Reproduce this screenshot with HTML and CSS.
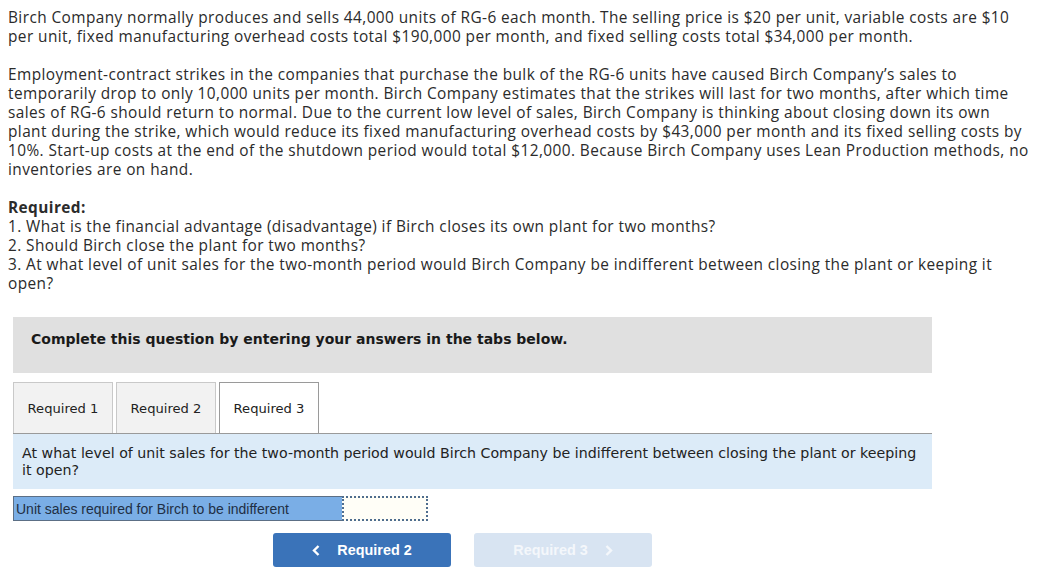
FILE: index.html
```html
<!DOCTYPE html>
<html>
<head>
<meta charset="utf-8">
<link rel="stylesheet" href="styles.css">
</head>
<body>
<div class="page">
  <div class="intro">
    <p>Birch Company normally produces and sells 44,000 units of RG-6 each month. The selling price is $20 per unit, variable costs are $10<br>per unit, fixed manufacturing overhead costs total $190,000 per month, and fixed selling costs total $34,000 per month.</p>
    <p>Employment-contract strikes in the companies that purchase the bulk of the RG-6 units have caused Birch Company’s sales to<br>temporarily drop to only 10,000 units per month. Birch Company estimates that the strikes will last for two months, after which time<br>sales of RG-6 should return to normal. Due to the current low level of sales, Birch Company is thinking about closing down its own<br>plant during the strike, which would reduce its fixed manufacturing overhead costs by $43,000 per month and its fixed selling costs by<br>10%. Start-up costs at the end of the shutdown period would total $12,000. Because Birch Company uses Lean Production methods, no<br>inventories are on hand.</p>
    <p class="last"><b>Required:</b><br>1. What is the financial advantage (disadvantage) if Birch closes its own plant for two months?<br>2. Should Birch close the plant for two months?<br>3. At what level of unit sales for the two-month period would Birch Company be indifferent between closing the plant or keeping it<br>open?</p>
  </div>

  <div class="panel">
    <div class="banner">Complete this question by entering your answers in the tabs below.</div>
    <div class="tabs">
      <div class="tab">Required 1</div>
      <div class="tab">Required 2</div>
      <div class="tab active">Required 3</div>
    </div>
    <div class="qbox">At what level of unit sales for the two-month period would Birch Company be indifferent between closing the plant or keeping<br>it open?</div>
    <div class="answer">
      <div class="label">Unit sales required for Birch to be indifferent</div>
      <div class="input"></div>
    </div>
    <div class="nav">
      <div class="btn prev"><svg class="chev left" width="8" height="11" viewBox="0 0 8 11"><path d="M6.5 1 L2 5.5 L6.5 10" fill="none" stroke="currentColor" stroke-width="2.4"/></svg>Required 2</div>
      <div class="btn next">Required 3<svg class="chev right" width="8" height="11" viewBox="0 0 8 11"><path d="M1.5 1 L6 5.5 L1.5 10" fill="none" stroke="currentColor" stroke-width="2.4"/></svg></div>
    </div>
  </div>
</div>
</body>
</html>
```

FILE: styles.css
```css
html, body {
  margin: 0;
  padding: 0;
  background: #fff;
}
.page {
  padding: 8px 0 0 8px;
}
.intro {
  font-family: "Open Sans", "Liberation Sans", sans-serif;
  font-size: 15.4px;
  letter-spacing: 0.42px;
  line-height: 19px;
  color: #2b2b2b;
  white-space: nowrap;
}
.intro p {
  margin: 0 0 19px 0;
}
.intro p.last {
  margin-bottom: 0;
}
.intro b {
  font-weight: 700;
}
.panel {
  margin-left: 5px;
  margin-top: 24px;
  width: 919px;
}
.banner {
  background: #e0e0e0;
  height: 56px;
  box-sizing: border-box;
  padding: 13px 18px 0 18px;
  font-family: "DejaVu Sans", Verdana, sans-serif;
  font-weight: bold;
  font-size: 14px;
  line-height: 18px;
  color: #1a1a1a;
}
.tabs {
  display: flex;
  gap: 3px;
  margin-top: 9px;
  height: 51px;
}
.tab {
  width: 100px;
  box-sizing: border-box;
  border: 1px solid #c9c9c9;
  border-bottom: none;
  background: #f2f2f2;
  display: flex;
  align-items: center;
  justify-content: center;
  font-family: "DejaVu Sans", Verdana, sans-serif;
  font-size: 13.1px;
  color: #222;
}
.tab.active {
  background: #fff;
  border: 1px solid #9a9a9a;
  border-bottom: none;
}
.qbox {
  background: #dcebf8;
  border-top: 1px solid #9a9a9a;
  height: 56px;
  box-sizing: border-box;
  padding: 11px 9px 0 9px;
  font-family: "DejaVu Sans", Verdana, sans-serif;
  font-size: 14.2px;
  line-height: 17px;
  color: #222;
  white-space: nowrap;
}
.answer {
  display: flex;
  margin-top: 7px;
  height: 25px;
}
.label {
  width: 329px;
  box-sizing: border-box;
  background: #7aaee6;
  border: 1px solid #5c6f85;
  border-right: none;
  font-family: "Liberation Sans", Arial, sans-serif;
  font-size: 14px;
  color: #1f2f44;
  padding-left: 2px;
  display: flex;
  align-items: center;
}
.input {
  width: 86px;
  box-sizing: border-box;
  background: #fffef7;
  border: 2px dotted #4f6d8e;
}
.nav {
  display: flex;
  gap: 23px;
  margin-top: 12px;
  margin-left: 260px;
}
.btn {
  width: 178px;
  height: 34px;
  border-radius: 3px;
  display: flex;
  align-items: center;
  justify-content: center;
  font-family: "Liberation Sans", Arial, sans-serif;
  font-weight: bold;
  font-size: 14.4px;
  color: #fff;
}
.prev {
  background: #3a73b9;
}
.next {
  background: #d8e4f2;
  color: #f4f7fb;
}
.chev {
  display: block;
}
.chev.left {
  margin-right: 17px;
}
.chev.right {
  margin-left: 17px;
}
```
